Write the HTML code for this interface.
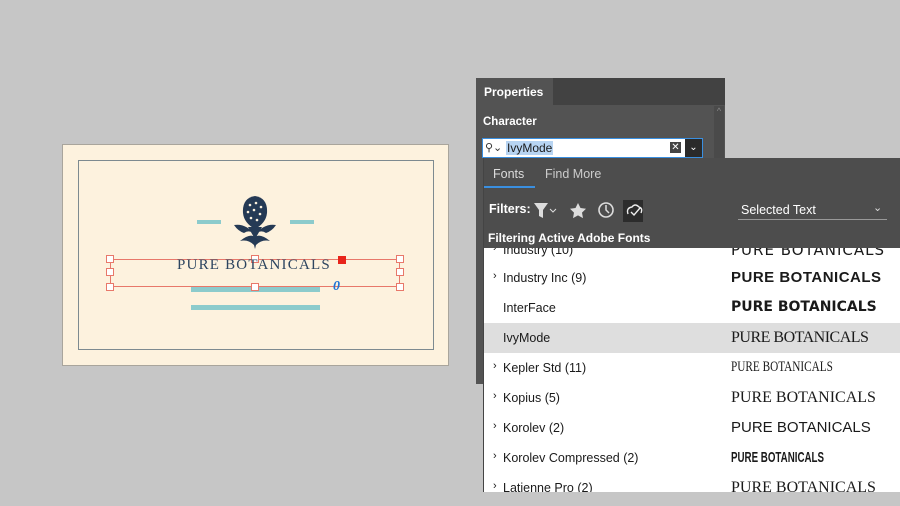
<!DOCTYPE html>
<html><head><meta charset="utf-8"><style>
*{margin:0;padding:0;box-sizing:border-box}
body{width:900px;height:506px;background:#c6c6c6;position:relative;overflow:hidden;font-family:"Liberation Sans",sans-serif}
.a{position:absolute}
.card{left:62px;top:144px;width:387px;height:222px;background:#fdf2de;border:1px solid #a9a59c}
.inner{left:78px;top:160px;width:356px;height:190px;border:1px solid #7d8a90}
.teal{background:#8ccbcc;position:absolute}
.h{position:absolute;width:8px;height:8px;border:1px solid #e8786a;background:#fff}
.row{position:absolute;left:0;width:417px;height:30px;font-size:12.5px;color:#1a1a1a}
.row .n{position:absolute;left:20px;top:8px}
.row .c{position:absolute;left:10px;top:7px;font-size:11px}
.row .p{position:absolute;left:248px;top:6px;font-size:15px;white-space:nowrap;transform-origin:left center}
</style></head><body>
<div class="a card"></div>
<div class="a inner"></div>
<div class="teal" style="left:197px;top:220px;width:24px;height:4px"></div>
<div class="teal" style="left:290px;top:220px;width:24px;height:4px"></div>
<div class="teal" style="left:191px;top:287px;width:129px;height:5px"></div>
<div class="teal" style="left:191px;top:305px;width:129px;height:5px"></div>
<svg class="a" style="left:230px;top:193px" width="50" height="56" viewBox="0 0 50 56">
<path d="M25 3 Q38 5 37 20 Q36 30 25 36 Q14 30 13 20 Q12 5 25 3Z" fill="#253a55"/>
<g fill="#fdf2de"><circle cx="20" cy="12" r="1.3"/><circle cx="26" cy="10" r="1.3"/><circle cx="31" cy="14" r="1.3"/><circle cx="18" cy="19" r="1.3"/><circle cx="24" cy="17" r="1.3"/><circle cx="30" cy="21" r="1.3"/><circle cx="21" cy="25" r="1.3"/><circle cx="27" cy="27" r="1.3"/></g>
<path d="M4 32 Q16 30 25 42 Q20 36 14 40 Q8 38 4 32Z M46 32 Q34 30 25 42 Q30 36 36 40 Q42 38 46 32Z" fill="#253a55"/>
<path d="M10 48 Q20 40 25 44 Q30 40 40 48 Q32 46 26 52 L25 56 L24 52 Q18 46 10 48Z" fill="#253a55"/>
<path d="M18 34 L25 46 L32 34" fill="#253a55"/>
</svg>
<div class="a" style="left:110px;top:259px;width:290px;height:28px;border:1px solid #e8786a"></div>
<div class="h" style="left:106px;top:255px"></div><div class="h" style="left:251px;top:255px"></div><div class="h" style="left:396px;top:255px"></div>
<div class="h" style="left:106px;top:268px"></div><div class="h" style="left:396px;top:268px"></div>
<div class="h" style="left:106px;top:283px"></div><div class="h" style="left:251px;top:283px"></div><div class="h" style="left:396px;top:283px"></div>
<div class="a" style="left:338px;top:256px;width:8px;height:8px;background:#e8241a"></div>
<div class="a" style="left:177px;top:257px;font-family:'Liberation Serif',serif;font-size:15px;letter-spacing:1.2px;color:#2d4560">PURE BOTANICALS</div>
<div class="a" style="left:333px;top:279px;font-family:'Liberation Serif',serif;font-style:italic;font-weight:bold;font-size:14px;color:#1f74d6">0</div>

<div class="a" style="left:476px;top:78px;width:249px;height:306px;background:#535353"></div>
<div class="a" style="left:553px;top:78px;width:172px;height:27px;background:#424242"></div>
<div class="a" style="left:484px;top:85px;color:#fff;font-size:12px;font-weight:bold">Properties</div>
<div class="a" style="left:714px;top:106px;width:10px;height:278px;background:#4a4a4a;color:#888;font-size:9px;text-align:center">^</div>
<div class="a" style="left:483px;top:116px;color:#fff;font-size:11.5px;font-weight:bold">Character</div>
<div class="a" style="left:482px;top:138px;width:221px;height:20px;background:#fff;border:1px solid #3a8fe0"></div>
<div class="a" style="left:485px;top:141px;font-size:11px;color:#333">⚲⌄</div>
<div class="a" style="left:506px;top:141px;font-size:12px;color:#1a1a1a;background:#b7d4f2;padding:0 1px;line-height:14px">IvyMode</div>
<div class="a" style="left:670px;top:142px;width:11px;height:11px;background:#444;color:#fff;font-size:10px;line-height:11px;text-align:center">✕</div>
<div class="a" style="left:685px;top:139px;width:17px;height:18px;background:#2a2a2a;color:#fff;font-size:10px;text-align:center;line-height:18px">⌄</div>

<div class="a" style="left:483px;top:158px;width:417px;height:90px;background:#4d4d4d"></div>
<div class="a" style="left:493px;top:167px;color:#ddd;font-size:12.5px">Fonts</div>
<div class="a" style="left:545px;top:167px;color:#ccc;font-size:12.5px">Find More</div>
<div class="a" style="left:484px;top:186px;width:51px;height:2px;background:#3a8fe0"></div>
<div class="a" style="left:489px;top:202px;color:#fff;font-size:12.5px;font-weight:bold">Filters:</div>
<svg class="a" style="left:533px;top:200px" width="110" height="22">
<path d="M1 3 H15 L10 10 V18 L6 16 V10Z" fill="#ddd"/><path d="M17 9 l3 3 3-3" stroke="#ddd" fill="none"/>
<path d="M45 3 l2.5 5 5.5 .8 -4 3.8 1 5.5 -5-2.7 -5 2.7 1-5.5 -4-3.8 5.5-.8z" fill="#ddd"/>
<circle cx="73" cy="10" r="7" stroke="#ddd" stroke-width="1.6" fill="none"/><path d="M73 5 V10 L76 13" stroke="#ddd" stroke-width="1.5" fill="none"/>
<rect x="90" y="0" width="22" height="22" fill="#2c2c2c"/><path d="M95 14 Q93 8 99 7 Q102 3 106 7 Q110 8 108 13 M98 12 l3 3 6-7" stroke="#eee" stroke-width="1.4" fill="none"/>
</svg>
<div class="a" style="left:741px;top:203px;color:#fff;font-size:12.5px">Selected Text</div>
<div class="a" style="left:873px;top:201px;color:#ddd;font-size:11px">⌄</div>
<div class="a" style="left:738px;top:219px;width:149px;height:1px;background:#999"></div>
<div class="a" style="left:488px;top:231px;color:#fff;font-size:12px;font-weight:bold">Filtering Active Adobe Fonts</div>

<div class="a" style="left:483px;top:248px;width:417px;height:244px;background:#fff;overflow:hidden">
<div class="row" style="top:-13px"><span class="c">›</span><span class="n">Industry (10)</span><span class="p" style="letter-spacing:1px;font-family:'DejaVu Sans'">PURE BOTANICALS</span></div>
<div class="row" style="top:15px"><span class="c">›</span><span class="n">Industry Inc (9)</span><span class="p" style="font-weight:bold;letter-spacing:.5px">PURE BOTANICALS</span></div>
<div class="row" style="top:45px"><span class="n">InterFace</span><span class="p" style="font-weight:bold;font-family:'DejaVu Sans';font-size:14px">PURE BOTANICALS</span></div>
<div class="row" style="top:75px;background:#dedede"><span class="n">IvyMode</span><span class="p" style="font-family:'Liberation Serif';font-size:16px;letter-spacing:-.5px">PURE BOTANICALS</span></div>
<div class="row" style="top:105px"><span class="c">›</span><span class="n">Kepler Std (11)</span><span class="p" style="font-family:'Liberation Serif';font-size:15px;transform:scaleX(.75)">PURE BOTANICALS</span></div>
<div class="row" style="top:135px"><span class="c">›</span><span class="n">Kopius (5)</span><span class="p" style="font-family:'Liberation Serif';font-size:16px">PURE BOTANICALS</span></div>
<div class="row" style="top:165px"><span class="c">›</span><span class="n">Korolev (2)</span><span class="p">PURE BOTANICALS</span></div>
<div class="row" style="top:195px"><span class="c">›</span><span class="n">Korolev Compressed (2)</span><span class="p" style="font-weight:bold;font-size:15px;transform:scaleX(.65)">PURE BOTANICALS</span></div>
<div class="row" style="top:225px"><span class="c">›</span><span class="n">Latienne Pro (2)</span><span class="p" style="font-family:'Liberation Serif';font-size:16px">PURE BOTANICALS</span></div>
</div>
<div class="a" style="left:483px;top:158px;width:1px;height:334px;background:#444"></div>
</body></html>
